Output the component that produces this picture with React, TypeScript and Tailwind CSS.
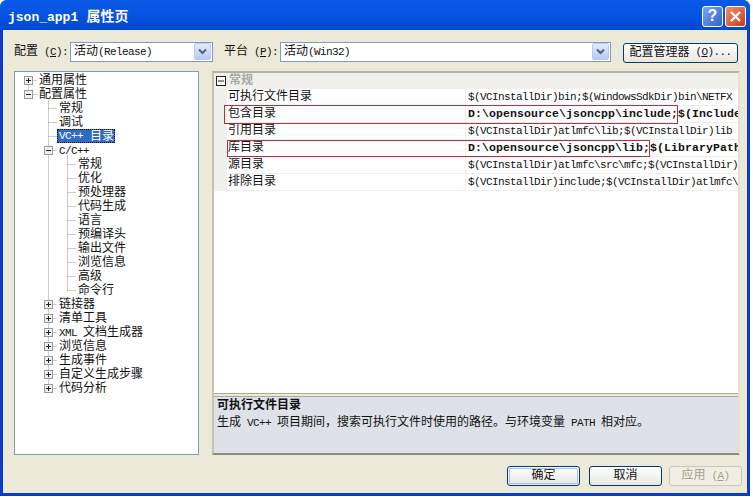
import React from "react";

const L = ({ children }: { children: React.ReactNode }) => <span className="text-[11px] tracking-[-0.6px] whitespace-pre">{children}</span>;
const U = ({ children }: { children: React.ReactNode }) => <span className="underline">{children}</span>;

const Arrow = () => (
  <div className="w-[17px] h-[17px] rounded-[2px] border border-[#b9cbf0] bg-gradient-to-b from-[#e3ebfd] to-[#b6c9f4] flex items-center justify-center shrink-0">
    <svg width="9" height="7" viewBox="0 0 9 7"><path d="M1 1.5 L4.5 5 L8 1.5" fill="none" stroke="#4d6185" strokeWidth="2" /></svg>
  </div>
);

const Combo = ({ w, text }: { w: string; text: React.ReactNode }) => (
  <div className={`${w} h-[20px] border border-[#7f9db9] bg-white flex items-center justify-between pl-[3px] pr-px`}>
    <span className="whitespace-nowrap leading-none">{text}</span>
    <Arrow />
  </div>
);

const Box = ({ open }: { open: boolean }) => (
  <svg width="9" height="9" viewBox="0 0 9 9" className="block">
    <rect x="0.5" y="0.5" width="8" height="8" fill="#f1f0ea" stroke="#8f9ca8" />
    <path d={open ? "M2 4.5 H7" : "M2 4.5 H7 M4.5 2 V7"} stroke="#222" />
  </svg>
);

type Node = { label: React.ReactNode; level: 0 | 1 | 2; box?: "+" | "-"; selected?: boolean };
const tree: Node[] = [
  { label: "通用属性", level: 0, box: "+" },
  { label: "配置属性", level: 0, box: "-" },
  { label: "常规", level: 1 },
  { label: "调试", level: 1 },
  { label: <><L>VC++ </L><span className="ml-px">目录</span></>, level: 1, selected: true },
  { label: <L>C/C++</L>, level: 1, box: "-" },
  { label: "常规", level: 2 },
  { label: "优化", level: 2 },
  { label: "预处理器", level: 2 },
  { label: "代码生成", level: 2 },
  { label: "语言", level: 2 },
  { label: "预编译头", level: 2 },
  { label: "输出文件", level: 2 },
  { label: "浏览信息", level: 2 },
  { label: "高级", level: 2 },
  { label: "命令行", level: 2 },
  { label: "链接器", level: 1, box: "+" },
  { label: "清单工具", level: 1, box: "+" },
  { label: <><L>XML </L>文档生成器</>, level: 1, box: "+" },
  { label: "浏览信息", level: 1, box: "+" },
  { label: "生成事件", level: 1, box: "+" },
  { label: "自定义生成步骤", level: 1, box: "+" },
  { label: "代码分析", level: 1, box: "+" },
];

const TreeLines = () => {
  const d: string[] = [];
  const cy = (i: number) => 8.5 + 14 * i;
  d.push(`M13.5 ${cy(0)} V${cy(1)}`, `M13.5 ${cy(0)} H22`, `M13.5 ${cy(1)} H22`);
  d.push(`M33.5 ${cy(1) + 5} V${cy(22)}`);
  tree.forEach((n, i) => {
    if (n.level === 1) d.push(`M33.5 ${cy(i)} H42`);
    if (n.level === 2) d.push(`M52.5 ${cy(i)} H61`);
  });
  d.push(`M52.5 ${cy(5) + 5} V${cy(15)}`);
  return (
    <svg className="absolute left-0 top-0" width="120" height="340">
      <path d={d.join(" ")} stroke="#9a9a9a" strokeDasharray="1 1" fill="none" />
    </svg>
  );
};

const TreeRow = ({ n }: { n: Node }) => {
  const indent = n.level === 0 ? "pl-[9px]" : n.level === 1 ? "pl-[29px]" : "pl-[48px]";
  return (
    <div className={`h-[14px] flex items-center relative ${indent}`}>
      <div className="w-[9px] h-[9px] mr-[6px] shrink-0">{n.box && <Box open={n.box === "-"} />}</div>
      <span
        className={
          n.selected
            ? "h-[14px] -ml-[2px] pl-[2px] pr-px pt-px bg-[#316ac5] text-white outline-1 outline-dotted outline-[#111] -outline-offset-1 flex items-center whitespace-pre"
            : "whitespace-pre pt-px"
        }
      >
        {n.label}
      </span>
    </div>
  );
};

const rows: { name: string; value: string; bold?: boolean }[] = [
  { name: "可执行文件目录", value: "$(VCInstallDir)bin;$(WindowsSdkDir)bin\\NETFX" },
  { name: "包含目录", value: "D:\\opensource\\jsoncpp\\include;$(Include", bold: true },
  { name: "引用目录", value: "$(VCInstallDir)atlmfc\\lib;$(VCInstallDir)lib" },
  { name: "库目录", value: "D:\\opensource\\jsoncpp\\lib;$(LibraryPath", bold: true },
  { name: "源目录", value: "$(VCInstallDir)atlmfc\\src\\mfc;$(VCInstallDir)" },
  { name: "排除目录", value: "$(VCInstallDir)include;$(VCInstallDir)atlmfc\\" },
];

const Btn = ({ children, def, disabled }: { children: React.ReactNode; def?: boolean; disabled?: boolean }) => (
  <div
    className={`w-[73px] h-[20px] rounded-[3px] flex items-center justify-center border whitespace-pre ${
      disabled
        ? "border-[#c9c7ba] bg-[#f0eee2] text-[#a19e8c]"
        : def
        ? "border-[#003c74] bg-gradient-to-b from-[#ffffff] to-[#e8e7de] outline outline-[#a9c2ea] -outline-offset-3"
        : "border-[#003c74] bg-gradient-to-b from-[#ffffff] to-[#e8e7de]"
    }`}
  >
    {children}
  </div>
);

export default function App() {
  return (
    <div className="w-[753px] h-[497px] bg-white overflow-hidden text-[12px] leading-none text-[#111] font-['Liberation_Mono','Noto_Sans_CJK_SC',monospace]">
      <div className="w-[750px] h-[496px] flex flex-col rounded-t-[7px] overflow-hidden bg-[#0b3cc8]">
        {/* title bar */}
        <div className="h-[30px] shrink-0 flex items-center justify-between pl-[8px] pr-[4px] bg-gradient-to-b from-[#0a5ae6] via-[#0554e3] to-[#0248d0]">
          <span className="text-white font-bold text-[14px] whitespace-pre pt-[3px]">
            <span className="text-[13px]">json_app1</span> 属性页
          </span>
          <div className="flex gap-[2px] pt-[2px]">
            <div className="w-[21px] h-[21px] rounded-[3px] border border-white bg-gradient-to-br from-[#7ba4f2] to-[#2e62d6] text-white font-bold text-[16px] flex items-center justify-center font-['Liberation_Sans',sans-serif]">?</div>
            <div className="w-[21px] h-[21px] rounded-[3px] border border-white bg-gradient-to-br from-[#ec8d70] to-[#c93a14] flex items-center justify-center">
              <svg width="13" height="13" viewBox="0 0 13 13"><path d="M2 2 L11 11 M11 2 L2 11" stroke="#fff" strokeWidth="2.4" /></svg>
            </div>
          </div>
        </div>
        {/* client area */}
        <div className="flex-1 min-h-0 mx-[3px] mb-[3px] bg-[#ece9d8] flex flex-col">
          <div className="h-[41px] shrink-0 flex items-center pl-[11px] pb-[5px] pt-[7px]">
            <span className="w-[56px] whitespace-pre">配置<L> </L><L>(<U>C</U>):</L></span>
            <Combo w="w-[143px]" text={<>活动<L>(Release)</L></>} />
            <span className="w-[56px] ml-[11px] whitespace-pre">平台<L> </L><L>(<U>P</U>):</L></span>
            <Combo w="w-[331px]" text={<>活动<L>(Win32)</L></>} />
            <div className="ml-[12px] w-[115px] h-[20px] mt-[2px] rounded-[3px] border border-[#003c74] bg-gradient-to-b from-[#ffffff] to-[#e8e7de] flex items-center justify-center whitespace-pre">
              配置管理器<L> (<U>O</U>)...</L>
            </div>
          </div>
          <div className="flex px-[11px] h-[384px] shrink-0">
            {/* tree */}
            <div className="w-[185px] h-[384px] border border-[#7f9db9] bg-white relative shrink-0 pt-px">
              <TreeLines />
              <div className="relative">
                {tree.map((n, i) => (
                  <TreeRow key={i} n={n} />
                ))}
              </div>
            </div>
            {/* properties */}
            <div className="ml-[13px] w-[528px] h-[384px] border-2 border-[#aca899] border-r-[#e4e1d2] border-b-[#8f8c7c] border-t-[#b5b2a2] border-l-[#c5c2b2] bg-white flex flex-col relative">
              <div className="h-[16px] shrink-0 bg-[#f1f0ec] flex items-center pl-[1px]">
                <svg width="11" height="11" viewBox="0 0 11 11" className="ml-px mr-[2px]"><rect x="0.5" y="0.5" width="9" height="9" fill="#fff" stroke="#222" /><path d="M2 5 H8" stroke="#222" /></svg>
                <span className="font-bold text-[#a9a9a9]">常规</span>
              </div>
              <div className="flex-1 min-h-0 flex flex-col">
                {rows.map((r) => (
                  <div key={r.name} className="h-[17px] shrink-0 flex border-b border-[#efefef]">
                    <div className="w-[13px] bg-[#f1f0ec] shrink-0" />
                    <div className="w-[239px] pl-[1px] flex items-center border-r border-[#efefef] shrink-0">{r.name}</div>
                    <div className={`flex-1 min-w-0 overflow-hidden whitespace-pre pl-[2px] flex items-center ${r.bold ? "font-bold text-[11.5px] tracking-[0.1px]" : "text-[11px] tracking-[-0.6px]"}`}>
                      {r.value}
                    </div>
                  </div>
                ))}
              </div>
              <div className="h-[4px] shrink-0 border-y border-[#aca899] bg-[#ece9d8]" />
              <div className="h-[56px] shrink-0 bg-[#dfe1e8] px-[3px] pt-[3px] flex flex-col gap-[5px]">
                <div className="font-bold h-[12px] whitespace-pre">可执行文件目录</div>
                <div className="whitespace-pre">生成<L> VC++ </L>项目期间，搜索可执行文件时使用的路径。与环境变量<L> PATH </L>相对应。</div>
              </div>
              <div className="absolute left-[10px] top-[32px] w-[454px] h-[19px] border border-[#b3313a]" />
              <div className="absolute left-[13px] top-[67px] w-[423px] h-[17px] border border-[#b3313a]" />
            </div>
          </div>
          <div className="flex justify-end pr-[5px] pt-[11px]">
            <Btn def>确定</Btn>
            <div className="ml-[9px]"><Btn>取消</Btn></div>
            <div className="ml-[7px]"><Btn disabled>应用<L> (<U>A</U>)</L></Btn></div>
          </div>
        </div>
      </div>
    </div>
  );
}
